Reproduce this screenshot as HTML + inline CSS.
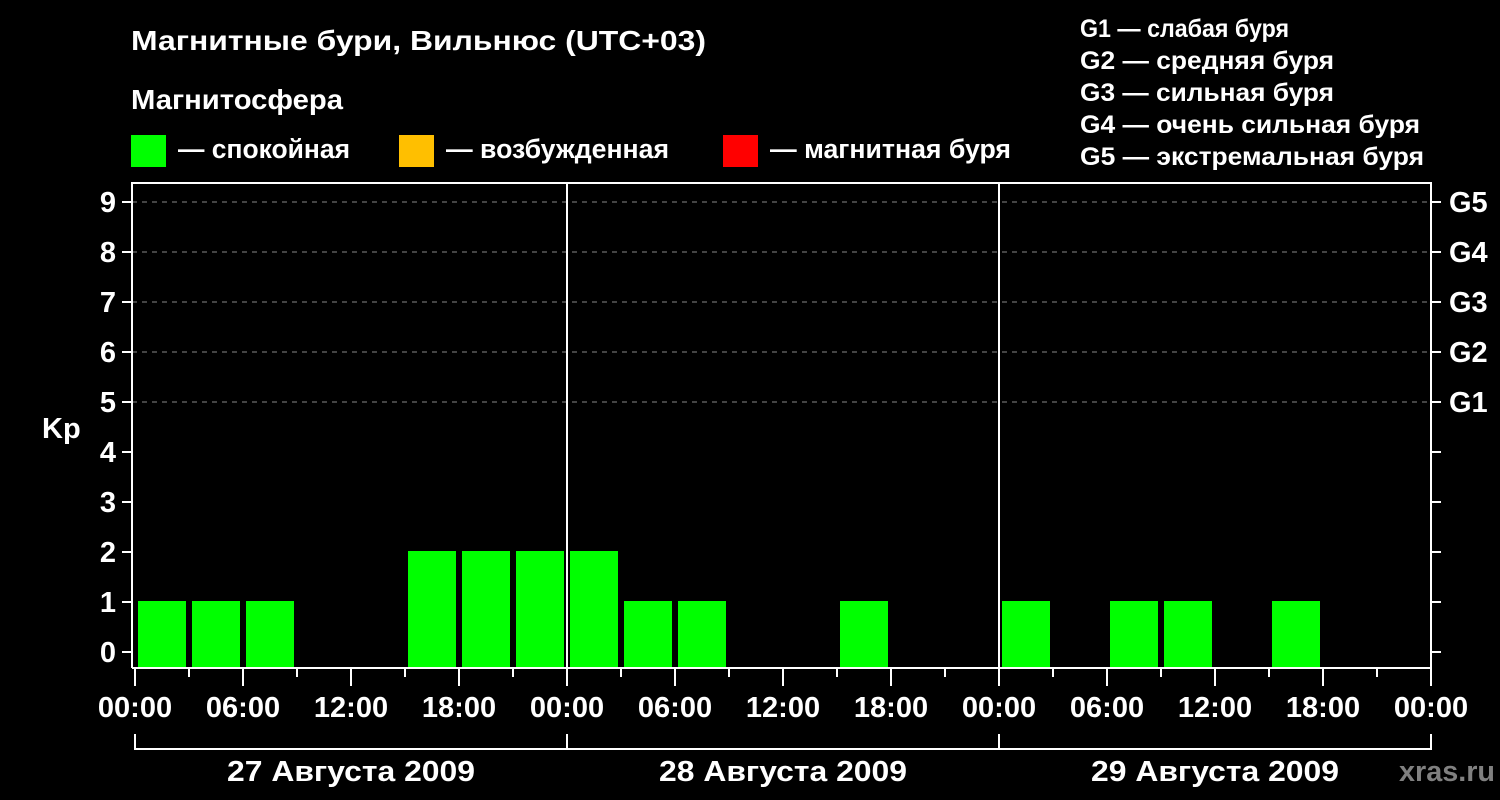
<!DOCTYPE html>
<html><head><meta charset="utf-8"><style>
html,body{margin:0;padding:0;background:#000;width:1500px;height:800px;overflow:hidden}
svg{display:block}
text{font-family:"Liberation Sans",sans-serif;font-weight:bold;fill:#fff}
</style></head><body>
<svg width="1500" height="800" viewBox="0 0 1500 800" xmlns="http://www.w3.org/2000/svg">
<rect width="1500" height="800" fill="#000"/>
<text x="131" y="50" font-size="28" textLength="575" lengthAdjust="spacingAndGlyphs">Магнитные бури, Вильнюс (UTC+03)</text>
<text x="131" y="109" font-size="28" textLength="212" lengthAdjust="spacingAndGlyphs">Магнитосфера</text>
<rect x="131" y="135" width="35" height="32" fill="#00ff00"/>
<text x="178" y="158" font-size="27" textLength="172" lengthAdjust="spacingAndGlyphs">— спокойная</text>
<rect x="399" y="135" width="35" height="32" fill="#ffbf00"/>
<text x="446" y="158" font-size="27" textLength="223" lengthAdjust="spacingAndGlyphs">— возбужденная</text>
<rect x="723" y="135" width="35" height="32" fill="#ff0000"/>
<text x="770" y="158" font-size="27" textLength="241" lengthAdjust="spacingAndGlyphs">— магнитная буря</text>
<g font-size="25">
<text x="1080" y="37" textLength="209" lengthAdjust="spacingAndGlyphs">G1 — слабая буря</text>
<text x="1080" y="69" textLength="254" lengthAdjust="spacingAndGlyphs">G2 — средняя буря</text>
<text x="1080" y="101" textLength="254" lengthAdjust="spacingAndGlyphs">G3 — сильная буря</text>
<text x="1080" y="133" textLength="340" lengthAdjust="spacingAndGlyphs">G4 — очень сильная буря</text>
<text x="1080" y="165" textLength="344" lengthAdjust="spacingAndGlyphs">G5 — экстремальная буря</text>
</g>
<g stroke="#888" stroke-width="1" stroke-dasharray="5,5">
<line x1="132" y1="202" x2="1431" y2="202"/>
<line x1="132" y1="252" x2="1431" y2="252"/>
<line x1="132" y1="302" x2="1431" y2="302"/>
<line x1="132" y1="352" x2="1431" y2="352"/>
<line x1="132" y1="402" x2="1431" y2="402"/>
</g>
<g fill="#00ff00">
<rect x="138" y="601" width="48" height="67"/>
<rect x="192" y="601" width="48" height="67"/>
<rect x="246" y="601" width="48" height="67"/>
<rect x="408" y="551" width="48" height="117"/>
<rect x="462" y="551" width="48" height="117"/>
<rect x="516" y="551" width="48" height="117"/>
<rect x="570" y="551" width="48" height="117"/>
<rect x="624" y="601" width="48" height="67"/>
<rect x="678" y="601" width="48" height="67"/>
<rect x="840" y="601" width="48" height="67"/>
<rect x="1002" y="601" width="48" height="67"/>
<rect x="1110" y="601" width="48" height="67"/>
<rect x="1164" y="601" width="48" height="67"/>
<rect x="1272" y="601" width="48" height="67"/>
</g>
<g stroke="#fff" stroke-width="2" fill="none">
<polyline points="132,668 132,183 1431,183 1431,668 132,668"/>
<line x1="567" y1="183" x2="567" y2="668"/>
<line x1="999" y1="183" x2="999" y2="668"/>
<path d="M122 202H132M122 252H132M122 302H132M122 352H132M122 402H132M122 452H132M122 502H132M122 552H132M122 602H132M122 652H132"/>
<path d="M1431 202H1441M1431 252H1441M1431 302H1441M1431 352H1441M1431 402H1441M1431 452H1441M1431 502H1441M1431 552H1441M1431 602H1441M1431 652H1441"/>
<path d="M135 668V686M243 668V686M351 668V686M459 668V686M567 668V686M675 668V686M783 668V686M891 668V686M999 668V686M1107 668V686M1215 668V686M1323 668V686M1431 668V686"/>
<path d="M189 668V677M297 668V677M405 668V677M513 668V677M621 668V677M729 668V677M837 668V677M945 668V677M1053 668V677M1161 668V677M1269 668V677M1377 668V677"/>
<path d="M135 734V749H1431V734M567 734V749M999 734V749"/>
</g>
<g font-size="29" text-anchor="end">
<text x="116" y="212">9</text><text x="116" y="262">8</text><text x="116" y="312">7</text><text x="116" y="362">6</text><text x="116" y="412">5</text><text x="116" y="462">4</text><text x="116" y="512">3</text><text x="116" y="562">2</text><text x="116" y="612">1</text><text x="116" y="662">0</text>
</g>
<text x="42" y="438" font-size="29">Kp</text>
<g font-size="29">
<text x="1449" y="212">G5</text><text x="1449" y="262">G4</text><text x="1449" y="312">G3</text><text x="1449" y="362">G2</text><text x="1449" y="412">G1</text>
</g>
<g font-size="29" text-anchor="middle">
<text x="135" y="717">00:00</text><text x="243" y="717">06:00</text><text x="351" y="717">12:00</text><text x="459" y="717">18:00</text>
<text x="567" y="717">00:00</text><text x="675" y="717">06:00</text><text x="783" y="717">12:00</text><text x="891" y="717">18:00</text>
<text x="999" y="717">00:00</text><text x="1107" y="717">06:00</text><text x="1215" y="717">12:00</text><text x="1323" y="717">18:00</text>
<text x="1431" y="717">00:00</text>
<text x="351" y="781" textLength="248" lengthAdjust="spacingAndGlyphs">27 Августа 2009</text>
<text x="783" y="781" textLength="248" lengthAdjust="spacingAndGlyphs">28 Августа 2009</text>
<text x="1215" y="781" textLength="248" lengthAdjust="spacingAndGlyphs">29 Августа 2009</text>
</g>
<text x="1447" y="781" font-size="29" text-anchor="middle" textLength="96" lengthAdjust="spacingAndGlyphs" style="fill:#808080">xras.ru</text>
</svg>
</body></html>
